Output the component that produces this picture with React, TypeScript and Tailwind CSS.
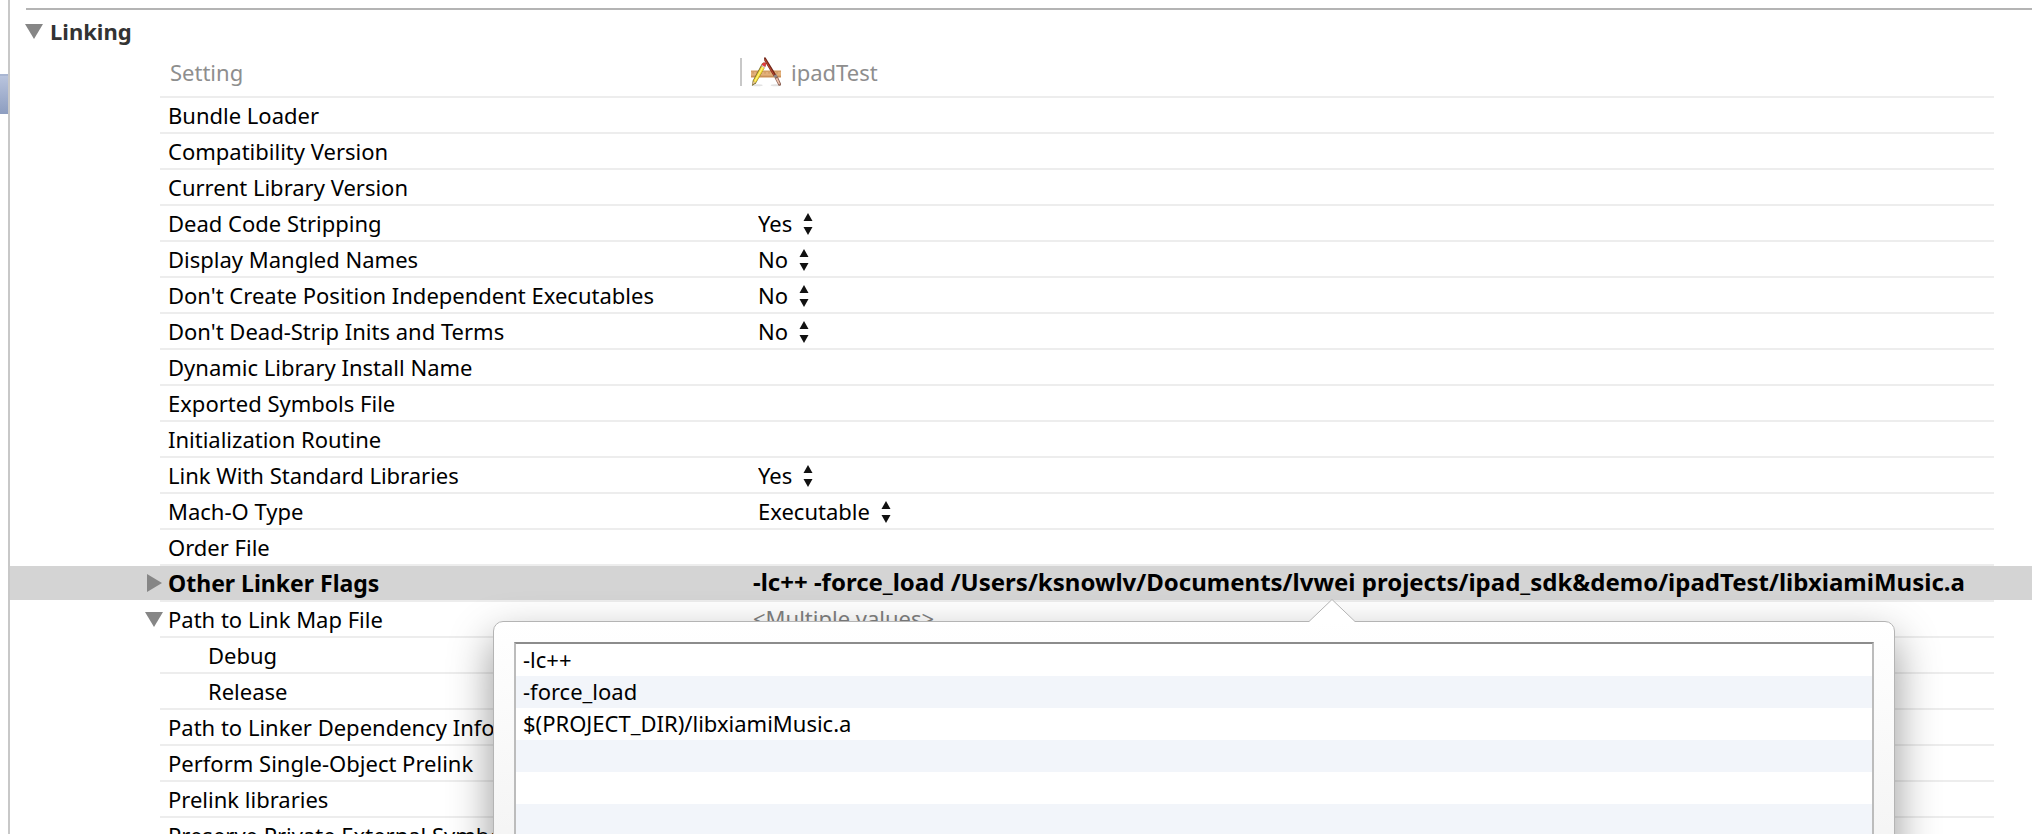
import React from "react";

type Setting = {
  name: string;
  options?: string[];
  value?: string;
  disclosure?: "open" | "closed";
  selected?: boolean;
  child?: boolean;
};

const YES_NO = ["Yes", "No"];

const SETTINGS: Setting[] = [
  { name: "Bundle Loader" },
  { name: "Compatibility Version" },
  { name: "Current Library Version" },
  { name: "Dead Code Stripping", options: YES_NO, value: "Yes" },
  { name: "Display Mangled Names", options: YES_NO, value: "No" },
  { name: "Don't Create Position Independent Executables", options: YES_NO, value: "No" },
  { name: "Don't Dead-Strip Inits and Terms", options: YES_NO, value: "No" },
  { name: "Dynamic Library Install Name" },
  { name: "Exported Symbols File" },
  { name: "Initialization Routine" },
  { name: "Link With Standard Libraries", options: YES_NO, value: "Yes" },
  { name: "Mach-O Type", options: ["Executable", "Dynamic Library", "Bundle", "Static Library"], value: "Executable" },
  { name: "Order File" },
  {
    name: "Other Linker Flags",
    value: "-lc++ -force_load /Users/ksnowlv/Documents/lvwei projects/ipad_sdk&demo/ipadTest/libxiamiMusic.a",
    disclosure: "closed",
    selected: true,
  },
  { name: "Path to Link Map File", value: "<Multiple values>", disclosure: "open" },
  { name: "Debug", child: true },
  { name: "Release", child: true },
  { name: "Path to Linker Dependency Info File" },
  { name: "Perform Single-Object Prelink" },
  { name: "Prelink libraries" },
  { name: "Preserve Private External Symbols" },
];

const FLAGS = ["-lc++", "-force_load", "$(PROJECT_DIR)/libxiamiMusic.a", "", "", "", ""];

function Disclosure({ open, label }: { open: boolean; label: string }) {
  return (
    <button type="button" aria-label={label} aria-expanded={open} className="block shrink-0">
      <svg width="18" height="18" viewBox="0 0 18 18" className="block" fill="#868686">
        {open ? <path d="M0 2H18L9 17Z" /> : <path d="M2 0V18L17 9Z" />}
      </svg>
    </button>
  );
}

function Stepper() {
  return (
    <svg width="10" height="24" viewBox="0 0 10 24" className="shrink-0" fill="#111">
      <path d="M5 2L9.5 10H.5ZM5 24L.5 16H9.5Z" />
    </svg>
  );
}

function AppIcon() {
  return (
    <svg width="30" height="30" viewBox="0 0 90 90" className="shrink-0">
      <ellipse cx="18" cy="85" rx="17" ry="3" fill="#e2e2e2" />
      <ellipse cx="74" cy="85" rx="15" ry="3" fill="#e2e2e2" />
      <rect x="0" y="41" width="90" height="20" fill="#e3b07a" />
      <rect x="0" y="41" width="90" height="4" fill="#d39c64" />
      <rect x="0" y="56" width="90" height="5" fill="#c98f58" />
      <path d="M6 45v5M18 45v5M30 45v5M42 45v5M54 45v5M66 45v5M78 45v5" stroke="#b98450" strokeWidth="2" />
      <path d="M3 87L5 71L32 21Q38 13 45 19L44 27L15 79Z" fill="#7a6c2c" />
      <path d="M7 72L32 27L41 32L14 77Z" fill="#f5d92f" />
      <path d="M10 73L34 29L37 31L12 75Z" fill="#fff68a" />
      <path d="M5 82L7 73L14 77Z" fill="#ecc89a" />
      <path d="M32 26L35 18Q40 14 45 19L42 31Z" fill="#e5383f" />
      <path d="M31 27L41 33L43 30L33 24Z" fill="#d9d4da" />
      <path d="M39 2Q43 -1 46 5L76 54L68 58L40 11Z" fill="#74281a" />
      <path d="M42 5L71 54L69 56L41 9Z" fill="#c04a32" />
      <path d="M67 56L76 52L80 59L72 64Z" fill="#8c8788" />
      <path d="M71 63L80 58L90 80Q91 88 83 86Z" fill="#8c6254" />
      <path d="M74 65L79 62L87 80Q86 84 83 81Z" fill="#eec3ae" />
    </svg>
  );
}

function FlagsPopover() {
  return (
    <div
      role="dialog"
      aria-label="Other Linker Flags"
      className="absolute top-[55px] right-[99px] -left-[247px] z-10 h-[400px] rounded-[10px] border border-[#b4b4b4] bg-linear-to-b from-white to-[#ececec] px-5 pt-5 text-[22px] font-normal shadow-[0_18px_44px_rgba(0,0,0,0.42)]"
    >
      <svg width="46" height="24" viewBox="0 0 46 24" className="absolute -top-[23px] left-[815px]">
        <path d="M0 24V22.500L23 .5L46 22.500V24Z" fill="#fff" />
        <path d="M0 22.500L23 .5L46 22.500" fill="none" stroke="#b4b4b4" />
      </svg>
      <ul className="border-x-2 border-t-2 border-x-[#bcbcbc] border-t-[#8c8c8c] bg-white">
        {FLAGS.map((flag, i) => (
          <li key={i} className="h-8 px-[7px] leading-[30px] even:bg-[#f2f5fa]">
            {flag}
          </li>
        ))}
      </ul>
    </div>
  );
}

function SettingRow({ setting }: { setting: Setting }) {
  const { name, options, value, disclosure, selected, child } = setting;
  const id = name.replace(/\W+/g, "-").toLowerCase();
  const tone = selected ? "bg-[#d4d4d4] font-bold" : "font-normal";
  return (
    <tr className="h-9">
      <td className={`border-b-2 border-transparent bg-clip-padding p-0 ${tone}`}>
        {disclosure && (
          <div className="-mr-[3px] flex justify-end">
            <Disclosure open={disclosure === "open"} label={`Toggle ${name}`} />
          </div>
        )}
      </td>
      <th
        scope="row"
        className={`border-b-2 border-[#ededed] bg-clip-padding py-0 text-left whitespace-nowrap ${child ? "pl-12" : "pl-2"} ${selected ? "text-[23px]" : ""} ${tone}`}
      >
        {options ? <label htmlFor={id}>{name}</label> : name}
      </th>
      <td
        className={`relative border-b-2 border-[#ededed] bg-clip-padding py-0 whitespace-nowrap ${options ? "pl-[18px]" : "pl-[13px]"} ${selected ? "text-[24px]" : ""} ${tone}`}
      >
        {options ? (
          <div className="flex items-center gap-[11px]">
            <select id={id} defaultValue={value} className="field-sizing-content appearance-none bg-transparent">
              {options.map((o) => (
                <option key={o}>{o}</option>
              ))}
            </select>
            <Stepper />
          </div>
        ) : (
          <div className={selected ? "pb-0.5 leading-7" : "pb-0.5 leading-7 text-[#808080]"}>{value}</div>
        )}
        {selected && <FlagsPopover />}
      </td>
      <td className={`border-b-2 border-transparent bg-clip-padding p-0 ${tone}`} />
    </tr>
  );
}

export default function App() {
  return (
    <div className="flex h-screen overflow-hidden bg-white font-['Noto_Sans','Open_Sans',sans-serif] text-[22px] leading-[30px] text-black">
      <aside className="w-2 shrink-0 pt-[74px]">
        <div className="h-10 border-t-2 border-[#a9b6d2] bg-linear-to-b from-[#b9c4dd] to-[#8d9dc0]" />
      </aside>
      <main className="min-w-0 flex-1 border-l-2 border-[#c8c8c8] pt-2">
        <div className="ml-4 border-t-2 border-[#b4b4b4]" />
        <h2 className="flex h-[42px] items-center gap-[7px] pl-[15px] font-bold text-[#333]">
          <Disclosure open label="Toggle Linking" />
          Linking
        </h2>
        <table className="w-full table-fixed border-separate border-spacing-0">
          <colgroup>
            <col className="w-[150px]" />
            <col className="w-[580px]" />
            <col />
            <col className="w-[38px]" />
          </colgroup>
          <thead>
            <tr className="h-[46px] text-left text-[#8e8e8e]">
              <td />
              <th scope="col" className="border-b-2 border-[#ededed] pt-0 pb-1 pl-[10px] font-normal">
                Setting
              </th>
              <th scope="col" className="border-b-2 border-[#ededed] px-0 pt-0 pb-1 font-normal">
                <div className="flex h-7 items-center gap-[10px] border-l-2 border-[#c8c8c8] pl-[9px]">
                  <AppIcon />
                  ipadTest
                </div>
              </th>
              <td />
            </tr>
          </thead>
          <tbody>
            {SETTINGS.map((s) => (
              <SettingRow key={s.name} setting={s} />
            ))}
          </tbody>
        </table>
      </main>
    </div>
  );
}
